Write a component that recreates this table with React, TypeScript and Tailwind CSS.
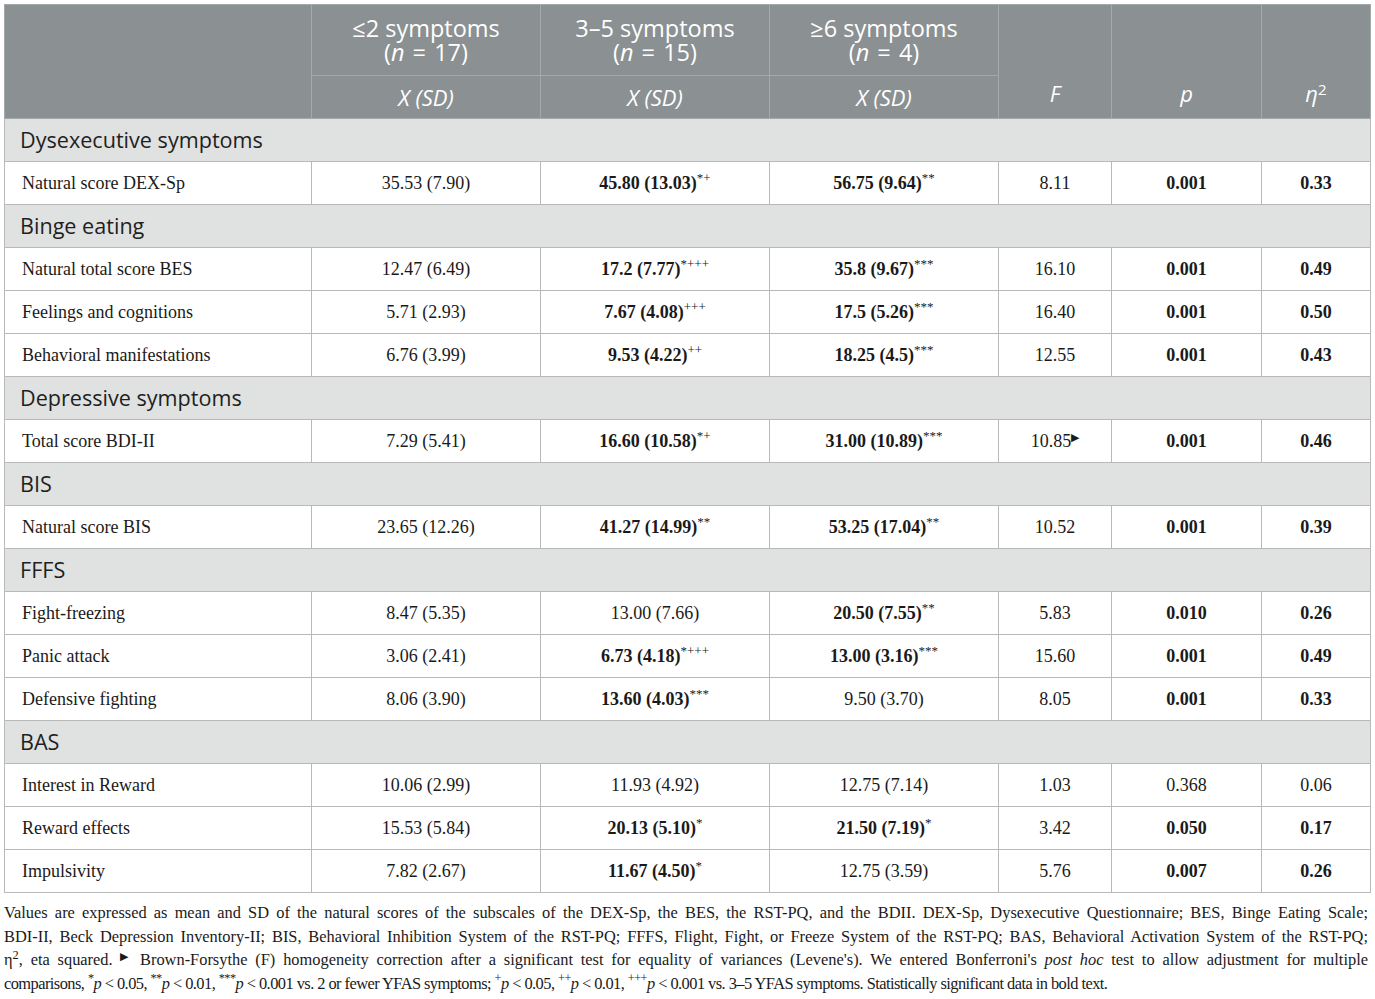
type Val = { v: string; sup?: string; b?: boolean };

type DataRow = {
  label: string;
  cols: [Val, Val, Val];
  f: string;
  fMark?: boolean;
  p: string;
  eta: string;
  sig: boolean;
};

type Section = { title: string; rows: DataRow[] };

const SECTIONS: Section[] = [
  {
    title: "Dysexecutive symptoms",
    rows: [
      {
        label: "Natural score DEX-Sp",
        cols: [{ v: "35.53 (7.90)" }, { v: "45.80 (13.03)", sup: "*+", b: true }, { v: "56.75 (9.64)", sup: "**", b: true }],
        f: "8.11",
        p: "0.001",
        eta: "0.33",
        sig: true,
      },
    ],
  },
  {
    title: "Binge eating",
    rows: [
      {
        label: "Natural total score BES",
        cols: [{ v: "12.47 (6.49)" }, { v: "17.2 (7.77)", sup: "*+++", b: true }, { v: "35.8 (9.67)", sup: "***", b: true }],
        f: "16.10",
        p: "0.001",
        eta: "0.49",
        sig: true,
      },
      {
        label: "Feelings and cognitions",
        cols: [{ v: "5.71 (2.93)" }, { v: "7.67 (4.08)", sup: "+++", b: true }, { v: "17.5 (5.26)", sup: "***", b: true }],
        f: "16.40",
        p: "0.001",
        eta: "0.50",
        sig: true,
      },
      {
        label: "Behavioral manifestations",
        cols: [{ v: "6.76 (3.99)" }, { v: "9.53 (4.22)", sup: "++", b: true }, { v: "18.25 (4.5)", sup: "***", b: true }],
        f: "12.55",
        p: "0.001",
        eta: "0.43",
        sig: true,
      },
    ],
  },
  {
    title: "Depressive symptoms",
    rows: [
      {
        label: "Total score BDI-II",
        cols: [{ v: "7.29 (5.41)" }, { v: "16.60 (10.58)", sup: "*+", b: true }, { v: "31.00 (10.89)", sup: "***", b: true }],
        f: "10.85",
        fMark: true,
        p: "0.001",
        eta: "0.46",
        sig: true,
      },
    ],
  },
  {
    title: "BIS",
    rows: [
      {
        label: "Natural score BIS",
        cols: [{ v: "23.65 (12.26)" }, { v: "41.27 (14.99)", sup: "**", b: true }, { v: "53.25 (17.04)", sup: "**", b: true }],
        f: "10.52",
        p: "0.001",
        eta: "0.39",
        sig: true,
      },
    ],
  },
  {
    title: "FFFS",
    rows: [
      {
        label: "Fight-freezing",
        cols: [{ v: "8.47 (5.35)" }, { v: "13.00 (7.66)" }, { v: "20.50 (7.55)", sup: "**", b: true }],
        f: "5.83",
        p: "0.010",
        eta: "0.26",
        sig: true,
      },
      {
        label: "Panic attack",
        cols: [{ v: "3.06 (2.41)" }, { v: "6.73 (4.18)", sup: "*+++", b: true }, { v: "13.00 (3.16)", sup: "***", b: true }],
        f: "15.60",
        p: "0.001",
        eta: "0.49",
        sig: true,
      },
      {
        label: "Defensive fighting",
        cols: [{ v: "8.06 (3.90)" }, { v: "13.60 (4.03)", sup: "***", b: true }, { v: "9.50 (3.70)" }],
        f: "8.05",
        p: "0.001",
        eta: "0.33",
        sig: true,
      },
    ],
  },
  {
    title: "BAS",
    rows: [
      {
        label: "Interest in Reward",
        cols: [{ v: "10.06 (2.99)" }, { v: "11.93 (4.92)" }, { v: "12.75 (7.14)" }],
        f: "1.03",
        p: "0.368",
        eta: "0.06",
        sig: false,
      },
      {
        label: "Reward effects",
        cols: [{ v: "15.53 (5.84)" }, { v: "20.13 (5.10)", sup: "*", b: true }, { v: "21.50 (7.19)", sup: "*", b: true }],
        f: "3.42",
        p: "0.050",
        eta: "0.17",
        sig: true,
      },
      {
        label: "Impulsivity",
        cols: [{ v: "7.82 (2.67)" }, { v: "11.67 (4.50)", sup: "*", b: true }, { v: "12.75 (3.59)" }],
        f: "5.76",
        p: "0.007",
        eta: "0.26",
        sig: true,
      },
    ],
  },
];

const SANS = "font-['Open_Sans','Noto_Sans',sans-serif]";
const SERIF = "font-['Liberation_Serif','Times_New_Roman',serif]";

const HEAD_CELL = "border border-[#a4a9ab] font-normal text-white";
const BODY_CELL = "border border-[#b9b9b9] text-center text-[#1a1a1a]";

function Value({ val }: { val: Val }) {
  return (
    <span className={val.b ? "font-bold" : ""}>
      {val.v}
      {val.sup && <sup className="text-[13px] font-normal">{val.sup}</sup>}
    </span>
  );
}

function GroupHead({ range, n }: { range: string; n: string }) {
  return (
    <th className={`${HEAD_CELL} align-middle text-[23.5px] leading-[24px]`}>
      <div>{range} symptoms</div>
      <div>
        (<i>n</i> <span className="px-[2px]">=</span> {n})
      </div>
    </th>
  );
}

export default function App() {
  return (
    <div className="min-h-screen bg-white pl-[4px] pt-[4px]">
      <table className={`w-[1366px] table-fixed border-collapse ${SERIF}`}>
        <colgroup>
          <col className="w-[307px]" />
          <col className="w-[229px]" />
          <col className="w-[229px]" />
          <col className="w-[229px]" />
          <col className="w-[113px]" />
          <col className="w-[150px]" />
          <col className="w-[109px]" />
        </colgroup>
        <thead className={`bg-[#8b9092] text-[22px] ${SANS}`}>
          <tr className="h-[71px]">
            <th rowSpan={2} className={HEAD_CELL}></th>
            <GroupHead range="≤2" n="17" />
            <GroupHead range="3–5" n="15" />
            <GroupHead range="≥6" n="4" />
            <th rowSpan={2} className={`${HEAD_CELL} pb-[8px] align-bottom italic`}>
              F
            </th>
            <th rowSpan={2} className={`${HEAD_CELL} pb-[8px] align-bottom italic`}>
              p
            </th>
            <th rowSpan={2} className={`${HEAD_CELL} pb-[8px] align-bottom`}>
              <i>η</i>
              <sup className="text-[15px]">2</sup>
            </th>
          </tr>
          <tr className="h-[43px]">
            <th className={`${HEAD_CELL} italic`}>X (SD)</th>
            <th className={`${HEAD_CELL} italic`}>X (SD)</th>
            <th className={`${HEAD_CELL} italic`}>X (SD)</th>
          </tr>
        </thead>
        <tbody className="text-[18px]">
          {SECTIONS.map((section) => (
            <>
              <tr key={section.title} className="h-[43px] bg-[#e0e2e1]">
                <td
                  colSpan={7}
                  className={`border border-[#b9b9b9] pl-[15px] text-[21.6px] text-[#1f1f1f] ${SANS}`}
                >
                  {section.title}
                </td>
              </tr>
              {section.rows.map((row) => (
                <tr key={row.label} className="h-[43px]">
                  <td className="border border-[#b9b9b9] pl-[17px] text-left text-[#1a1a1a]">
                    {row.label}
                  </td>
                  {row.cols.map((c, i) => (
                    <td key={i} className={BODY_CELL}>
                      <Value val={c} />
                    </td>
                  ))}
                  <td className={BODY_CELL}>
                    {row.f}
                    {row.fMark && <sup className="text-[11px]">▶</sup>}
                  </td>
                  <td className={`${BODY_CELL} ${row.sig ? "font-bold" : ""}`}>{row.p}</td>
                  <td className={`${BODY_CELL} ${row.sig ? "font-bold" : ""}`}>{row.eta}</td>
                </tr>
              ))}
            </>
          ))}
        </tbody>
      </table>

      {/* notes under the table, one block per printed line */}
      <div className={`mt-[8px] w-[1364px] text-[16.4px] leading-[23.5px] text-[#1a1a1a] ${SERIF}`}>
        <p className="text-justify [text-align-last:justify]">
          Values are expressed as mean and SD of the natural scores of the subscales of the DEX-Sp, the BES, the RST-PQ, and the BDII. DEX-Sp, Dysexecutive Questionnaire; BES, Binge Eating Scale;
        </p>
        <p className="text-justify [text-align-last:justify]">
          BDI-II, Beck Depression Inventory-II; BIS, Behavioral Inhibition System of the RST-PQ; FFFS, Flight, Fight, or Freeze System of the RST-PQ; BAS, Behavioral Activation System of the RST-PQ;
        </p>
        <p className="text-justify [text-align-last:justify]">
          η<sup>2</sup>, eta squared. <sup className="text-[11px]">▶</sup> Brown-Forsythe (F) homogeneity correction after a significant test for equality of variances (Levene's). We entered Bonferroni's <i>post hoc</i> test to allow adjustment for multiple
        </p>
        <p className="tracking-[-0.55px]">
          comparisons, <sup>*</sup>
          <i>p</i> &lt; 0.05, <sup>**</sup>
          <i>p</i> &lt; 0.01, <sup>***</sup>
          <i>p</i> &lt; 0.001 vs. 2 or fewer YFAS symptoms; <sup>+</sup>
          <i>p</i> &lt; 0.05, <sup>++</sup>
          <i>p</i> &lt; 0.01, <sup>+++</sup>
          <i>p</i> &lt; 0.001 vs. 3–5 YFAS symptoms. Statistically significant data in bold text.
        </p>
      </div>
    </div>
  );
}
